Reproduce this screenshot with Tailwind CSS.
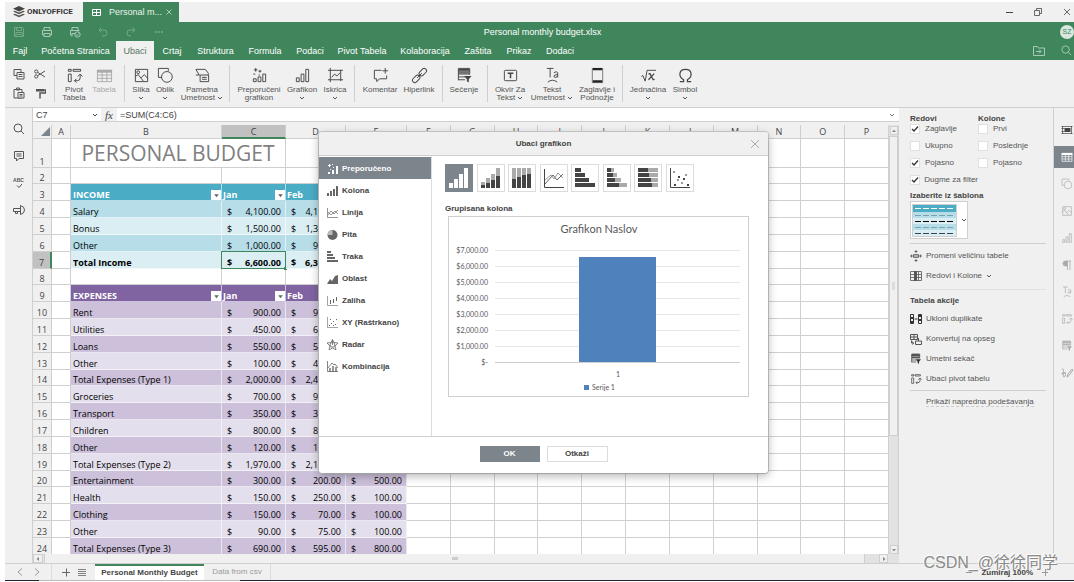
<!DOCTYPE html>
<html lang="sr">
<head>
<meta charset="utf-8">
<title>Personal monthly budget.xlsx</title>
<script src="https://cdn.jsdelivr.net/npm/@tailwindcss/browser@4"></script>
</head>
<body class="flex h-screen flex-col overflow-hidden bg-white pt-[2px] pl-[5px] font-['Liberation_Sans',Arial,sans-serif] text-[8px] leading-[10px] text-[#444]">

<svg class="hidden" aria-hidden="true">
  <defs>
    <symbol id="copy" viewBox="0 0 12 12"><path d="M1 1.500h7v6H1z" fill="none" stroke="currentColor"/><path d="M4 4.500h7V11H4z" fill="#f0f0f0" stroke="currentColor"/><path d="M5.500 6.500h4M5.500 8.500h4" stroke="currentColor"/></symbol>
    <symbol id="paste" viewBox="0 0 12 12"><path d="M1 2.500h8V11H1zM3.500 1h3v2h-3z" fill="none" stroke="currentColor"/><path d="M5 5.500h6V11H5z" fill="#f0f0f0" stroke="currentColor"/><path d="M6.500 7.500h3M6.500 9h3" stroke="currentColor"/></symbol>
    <symbol id="cut" viewBox="0 0 12 12"><g fill="none" stroke="currentColor"><circle cx="2.200" cy="3.500" r="1.600"/><circle cx="2.200" cy="8.500" r="1.600"/><path d="M3.600 4.300 11 9M3.600 7.700 11 3"/></g></symbol>
    <symbol id="brush" viewBox="0 0 12 12"><path d="M2 2h8v2.500H2z" fill="currentColor"/><path d="M10 3h1.500v3H6v5.500" fill="none" stroke="currentColor" stroke-width="1.500"/></symbol>
    <symbol id="pivot" viewBox="0 0 18 18"><g fill="none" stroke="currentColor"><path d="M2.500 2.500h3v2h-3zM7.500 2.500h8v2h-8zM2.500 7.500h3v8h-3zM9 14.500h3q3 0 3-3V8M12.500 10 15 7.500 17.500 10M11 12.500 9 14.500l2 2"/></g></symbol>
    <symbol id="table" viewBox="0 0 18 18"><path d="M1.500 3.500h15v12h-15zM1.500 8.500h15M1.500 12h15M6.500 5v10.500M11.500 5v10.500" fill="none" stroke="currentColor"/><path d="M1 3h16v3H1z" fill="currentColor"/></symbol>
    <symbol id="image" viewBox="0 0 18 18"><g fill="none" stroke="currentColor"><path d="M2.500 2.500h13v13h-13z"/><circle cx="5.500" cy="5.500" r="1.500"/><path d="m2.500 10 3-2 5.500 7M8.500 11.500 12 8l3.500 4"/></g></symbol>
    <symbol id="shapes" viewBox="0 0 18 18"><g fill="none" stroke="currentColor"><path d="M5 11H1.500V1.500H12V4"/><circle cx="10.500" cy="10.500" r="5.700"/></g></symbol>
    <symbol id="smart" viewBox="0 0 18 18"><g fill="none" stroke="currentColor"><path d="M5.500 8.500 2 2.500h10l3.500 4.500-1 1.500M2 8.500h4M6.500 8.500h9v7h-9zM8.500 11h5M8.500 13h5"/></g></symbol>
    <symbol id="recchart" viewBox="0 0 18 18"><g fill="none" stroke="currentColor"><path d="M2.500 12.500h3v3h-3zM7.500 10.500h3v5h-3zM12.500 7.500h3v8h-3z"/><path d="M5 1v4M3 3h4M9.500 3v3M8 4.500h3M2.500 7.500h2M8 8.500h1.500"/></g></symbol>
    <symbol id="chart" viewBox="0 0 18 18"><path d="M2.500 11.500h3v4h-3zM7.500 7.500h3v8h-3zM12.500 2.500h3v13h-3z" fill="none" stroke="currentColor"/></symbol>
    <symbol id="spark" viewBox="0 0 18 18"><g fill="none" stroke="currentColor"><path d="M1 3.500h16M1 13.500h16M3.500 1v15M14.500 3v12M5 11l3-3.500 2.500 2L14 6"/></g></symbol>
    <symbol id="comment" viewBox="0 0 18 18"><path d="M10 3.500H2.500v9H5v3l3-3h7.500V9M14 1v6M11 4h6" fill="none" stroke="currentColor"/></symbol>
    <symbol id="link" viewBox="0 0 18 18"><g fill="none" stroke="currentColor"><rect x="8" y="3" width="9" height="5" rx="2.500" transform="rotate(-45 12.500 5.500)"/><rect x="1" y="10" width="9" height="5" rx="2.500" transform="rotate(-45 5.500 12.500)"/><path d="m6.500 11.500 5-5"/></g></symbol>
    <symbol id="slicer" viewBox="0 0 18 18"><path d="M2.500 1.500h12v3h-12zM2.500 7.500h12M2.500 10.500h7M2.500 13.500h7M2.500 4v10M14.500 4v4" fill="none" stroke="currentColor"/><path d="M3 2h11v2H3zM3 5.500h11V7H3zM8.500 9.500h8l-3 3.500v3.500l-2-1.500v-2z" fill="currentColor"/></symbol>
    <symbol id="textbox" viewBox="0 0 18 18"><rect x="2.500" y="3.500" width="13" height="11" rx="1" fill="none" stroke="currentColor"/><path d="M6 6.500h6M9 6.500V12" fill="none" stroke="currentColor" stroke-width="1.600"/></symbol>
    <symbol id="textart" viewBox="0 0 18 18"><g fill="none" stroke="currentColor"><path d="M3 1.500h7M6.500 1.500V11M10.500 6q3-2 4 0v5M14.500 8q-4 0-4 1.700 0 1.500 2 1.300 1.500-.300 2-1.500M4 16q5-4 10 0"/></g></symbol>
    <symbol id="headfoot" viewBox="0 0 18 18"><path d="M3.500 1.500h11v15h-11z" fill="#f0f0f0" stroke="currentColor" stroke-width=".7"/><path d="M4 1h10v2.500H4zM4 14h10v2.500H4z" fill="#222"/></symbol>
    <symbol id="equation" viewBox="0 0 18 18"><g fill="none" stroke="currentColor"><path d="m1.500 10 1.500-1 2.500 6 2-11.500H17"/><path d="m9 7.500 1.500-.500 3.500 6.500 1.500-.500M15 7l-6 6.500" stroke-width="1.300"/></g></symbol>
    <symbol id="omega" viewBox="0 0 18 18"><path d="M3 15.500h4V13.500C1 10 2 2.500 9 2.500s8 7.500 2 11v2h4" fill="none" stroke="currentColor" stroke-width="1.300"/></symbol>
    <symbol id="chev" viewBox="0 0 6 6"><path d="m1 2 2 2 2-2" fill="none" stroke="currentColor"/></symbol>
    <symbol id="search" viewBox="0 0 12 12"><circle cx="5" cy="5" r="4" fill="none" stroke="currentColor"/><path d="m8 8 3 3" stroke="currentColor"/></symbol>
    <symbol id="tri" viewBox="0 0 6 6"><path d="M1 2h4L3 4.500z" fill="currentColor"/></symbol>
    <symbol id="cell" viewBox="0 0 12 12"><path d="M1.500 2v8M.5 2.500h11M.5 9.500h11M10.500 2v8M.5 4.500h3M.5 7.500h3" stroke="currentColor" stroke-width=".7" fill="none"/><path d="M3.500 4h6v4h-6z" fill="currentColor"/></symbol>
    <symbol id="para" viewBox="0 0 12 12"><path d="M6 2H4.500a2.500 2.500 0 0 0 0 5H6zM6.500 2v9M9 2v9M6 2h4" fill="currentColor" stroke="currentColor" stroke-width=".8"/></symbol>
    <symbol id="sign" viewBox="0 0 12 12"><path d="M1 2c3-2 0 8 2 8s2-6 0-4-2 1-2 0M6 10l1-3 4-5 1 1-4 5.500zM1 6h4" fill="none" stroke="currentColor"/></symbol>
  </defs>
</svg>

<!-- Window title bar -->
<div class="flex h-5 shrink-0 items-stretch bg-[#f0f0f0]">
  <div class="flex w-[78px] items-center gap-[2px] pl-[8px] font-['Roboto',sans-serif] font-bold text-[#333]">
    <svg class="size-3 shrink-0" viewBox="0 0 12 12"><path d="m6 0 6 2.700-6 2.700L0 2.700z" fill="#444"/><path d="m0 5.500 1.800-.8L6 6.600l4.200-1.900 1.800.8-6 2.700zM0 8.500l1.800-.8L6 9.600l4.200-1.900 1.800.8-6 2.800z" fill="#555"/></svg>
    <span>ONLYOFFICE</span>
  </div>
  <div class="flex w-24 items-center bg-[#40865c] pr-[6px] pl-[9px] text-[9px] text-[#eaf2ed]">
    <svg class="size-[9px] shrink-0" viewBox="0 0 9 9"><path d="M.5 1.500h8v6h-8zM.5 4.500h8M4.500 1.500v6" fill="none" stroke="#fff"/></svg>
    <span class="ml-2 grow whitespace-nowrap">Personal m...</span>
    <button aria-label="Close tab"><svg class="size-2" viewBox="0 0 8 8"><path d="m1.500 1.500 5 5m0-5-5 5" stroke="#c5dbcf" stroke-width=".8" fill="none"/></svg></button>
  </div>
  <div class="ml-auto flex items-center gap-[19px] pr-[2px] text-[#444]">
    <button aria-label="Minimize"><svg class="size-[10px]" viewBox="0 0 10 10"><path d="M2 5.500h7" stroke="currentColor"/></svg></button>
    <button aria-label="Restore"><svg class="size-[10px]" viewBox="0 0 10 10"><path d="M1.500 3.500h5v5h-5zM3.500 3V1.500h5v5H7" fill="none" stroke="currentColor" stroke-width=".8"/></svg></button>
    <button aria-label="Close"><svg class="size-[10px]" viewBox="0 0 10 10"><path d="m2 2 6 6m0-6L2 8" fill="none" stroke="currentColor" stroke-width=".8"/></svg></button>
  </div>
</div>

<!-- Quick access and document title -->
<header class="shrink-0 bg-[#40865c] text-[9px] text-white">
  <div class="grid h-[19px] grid-cols-[1fr_auto_1fr] items-center">
    <div class="flex items-center gap-4 pl-2 text-[#a9cab7]">
      <button class="opacity-50" aria-label="Save"><svg class="size-3" viewBox="0 0 12 12"><path d="M1.500 1.500h8l1 1v8h-9zM3.500 1.500v3h5v-3M3 10.500v-4h6v4M4 8.500h4" fill="none" stroke="currentColor"/></svg></button>
      <button aria-label="Print"><svg class="size-3" viewBox="0 0 12 12"><path d="M3 4V1.500h6V4M3 9H1.500V4.500h9V9H9M3 7.500h6v3H3z" fill="none" stroke="currentColor"/></svg></button>
      <button aria-label="Quick print"><svg class="size-3" viewBox="0 0 12 12"><path d="M3 4V1.500h6V4M3 9H1.500V4.500h9M3 10.500v-3h3" fill="none" stroke="currentColor"/><circle cx="8.500" cy="8.500" r="2.700" fill="none" stroke="currentColor"/><path d="m7 8.500 1 1 2-2" fill="none" stroke="currentColor"/></svg></button>
      <button class="opacity-50" aria-label="Undo"><svg class="size-3" viewBox="0 0 12 12"><path d="M4.500 1.500 2 4l2.500 2.500M2 4h5a3 3 0 0 1 0 6H5" fill="none" stroke="currentColor"/></svg></button>
      <button class="opacity-50" aria-label="Redo"><svg class="size-3" viewBox="0 0 12 12"><path d="M7.500 1.500 10 4 7.500 6.500M10 4H5a3 3 0 0 0 0 6h1" fill="none" stroke="currentColor"/></svg></button>
      <button aria-label="More"><svg class="size-3" viewBox="0 0 12 12"><path d="M2 6h1.500M5 6h1.500M8 6h1.500" stroke="currentColor"/></svg></button>
    </div>
    <h1 class="pl-[6px]">Personal monthly budget.xlsx</h1>
    <div class="flex justify-end"><span class="flex size-[14px] items-center justify-center rounded-full bg-[#d9e7df] text-[7px] text-[#40865c]">SZ</span></div>
  </div>
  <nav class="flex h-[19px] items-stretch">
    <div id="tabs" class="flex"></div>
    <div class="ml-auto flex items-center gap-4 pr-[2px] text-[#a9cab7]">
      <button aria-label="Open location"><svg class="size-3" viewBox="0 0 12 12"><path d="M.5 10.500v-9h4l1 1.500h6v7.500zM3 6.500h5M6 4.500l2 2-2 2" fill="none" stroke="currentColor"/></svg></button>
      <button aria-label="Search"><svg class="size-[11px]"><use href="#search"/></svg></button>
    </div>
  </nav>
</header>

<!-- Ribbon -->
<div class="flex h-[48px] shrink-0 items-stretch border-b border-[#cfcfcf] bg-[#f0f0f0] py-[5px]">
  <div class="grid w-[49px] shrink-0 grid-cols-2 place-items-center pr-1 pl-1 text-[#555]">
    <button aria-label="Copy"><svg class="size-3"><use href="#copy"/></svg></button>
    <button aria-label="Cut"><svg class="size-3"><use href="#cut"/></svg></button>
    <button aria-label="Paste"><svg class="size-3"><use href="#paste"/></svg></button>
    <button aria-label="Format painter"><svg class="size-3"><use href="#brush"/></svg></button>
  </div>
  <div id="ribbon" class="flex"></div>
</div>

<main class="flex min-h-0 flex-1 bg-[#f0f0f0]">
  <!-- Left tools -->
  <aside class="flex w-7 shrink-0 flex-col items-center gap-[15px] border-r border-[#cfcfcf] pt-[15px] text-[#555]">
    <button aria-label="Find"><svg class="size-3"><use href="#search"/></svg></button>
    <button aria-label="Comments"><svg class="size-3" viewBox="0 0 12 12"><path d="M1.500 1.500h9v7H6l-2.500 2.500V8.500h-2zM3.500 4h5M3.500 6h5" fill="none" stroke="currentColor"/></svg></button>
    <button aria-label="Spell check" class="flex size-3 flex-col items-center text-[5px] leading-[6px] font-bold"><span>ABC</span><svg class="size-[6px]" viewBox="0 0 6 6"><path d="m1 2.500 2 2 3-3.500" fill="none" stroke="currentColor"/></svg></button>
    <button aria-label="Feedback"><svg class="size-3" viewBox="0 0 12 12"><path d="M.5 4.500H7M7 7.500H.5v-3M7.500 2.500v7M2.500 7.500v2h2v-2" fill="none" stroke="currentColor"/><path d="M7.500 1.500q4 1 4 4.500t-4 4.500z" fill="none" stroke="currentColor"/></svg></button>
  </aside>

  <div class="flex min-w-0 flex-1 flex-col">
    <!-- Formula bar -->
    <div class="flex h-[14px] shrink-0 items-stretch border-b border-[#cfcfcf] bg-white text-[9px]">
      <label class="flex w-[68px] items-center px-[3px]"><input class="w-full min-w-0 outline-none" aria-label="Cell name" value="C7"><svg class="size-[6px] shrink-0"><use href="#chev"/></svg></label>
      <button class="w-4 bg-[#f0f0f0] font-['Liberation_Serif',serif] text-[11px] italic" aria-label="Insert function">fx</button>
      <input class="min-w-0 flex-1 pl-[3px] outline-none" aria-label="Formula" value="=SUM(C4:C6)">
      <button aria-label="Expand formula bar" class="flex w-[10px] items-center"><svg class="size-[6px] text-[#777]"><use href="#chev"/></svg></button>
    </div>
    <!-- Sheet -->
    <div class="flex min-h-0 flex-1 pt-[3px]">
      <div class="min-w-0 flex-1 overflow-hidden bg-white">
        <table class="w-full table-fixed border-separate border-spacing-0 font-['Open_Sans',sans-serif] text-[9px] leading-[11px] text-black">
          <colgroup><col class="w-[19px]"><col class="w-[19px]"><col class="w-[151px]"><col class="w-16"><col class="w-[60px]"><col class="w-[61px]"><col span="11"></colgroup>
          <thead id="heads" class="bg-[#f0f0f0] text-[#444]"></thead>
          <tbody id="rows"></tbody>
        </table>
      </div>
      <div class="flex w-[10px] shrink-0 flex-col border-r border-[#cfcfcf] bg-[#e2e2e2] text-[#888]">
        <button class="m-px flex h-[9px] w-2 items-center justify-center border border-[#cfcfcf] bg-[#f0f0f0]" aria-label="Scroll up"><svg class="size-[6px] rotate-180"><use href="#tri"/></svg></button>
        <div class="flex h-[300px] w-[9px] items-center justify-center border border-[#cfcfcf] bg-[#f0f0f0]"><span class="h-2 w-[3px] bg-[#dcdcdc]"></span></div>
        <button class="mx-px mt-auto flex h-[9px] w-2 items-center justify-center border border-[#cfcfcf] bg-[#f0f0f0]" aria-label="Scroll down"><svg class="size-[6px]"><use href="#tri"/></svg></button>
      </div>
    </div>
    <div class="flex h-[9px] shrink-0 items-stretch bg-[#e2e2e2] pr-[11px] text-[#888]">
      <button class="mr-px flex w-[10px] items-center justify-center border border-[#cfcfcf] bg-[#f0f0f0]" aria-label="Scroll left"><svg class="size-[6px] rotate-90"><use href="#tri"/></svg></button>
      <div class="mr-[14px] flex flex-1 items-center justify-center border-x border-[#cfcfcf] bg-[#f0f0f0]"><span class="h-[3px] w-[6px] bg-[#ccc]"></span></div>
      <button class="flex w-[9px] items-center justify-center border border-[#cfcfcf] bg-[#f0f0f0]" aria-label="Scroll right"><svg class="size-[6px] -rotate-90"><use href="#tri"/></svg></button>
    </div>
  </div>

  <!-- Table settings -->
  <aside class="w-[154px] shrink-0 pt-[6px] pr-[7px] pl-[11px] text-[#555]">
    <div class="grid grid-cols-2 leading-[9px] font-bold text-[#444]"><h2>Redovi</h2><h2>Kolone</h2></div>
    <div id="checks" class="grid grid-cols-2"></div>
    <h2 class="font-bold text-[#444]">Izaberite iz šablona</h2>
    <button class="flex h-[38px] w-[58px] items-center gap-1 border border-[#cfcfcf] bg-white pl-[1px]" aria-label="Template">
      <svg class="h-[33px] w-[45px] border border-[#cfcfcf]" viewBox="0 0 43 31"><rect width="43" height="7" fill="#4bacc6"/><rect y="7" width="43" height="6" fill="#b6dde8"/><rect y="13" width="43" height="6" fill="#daeef3"/><rect y="19" width="43" height="6" fill="#b6dde8"/><rect y="25" width="43" height="6" fill="#daeef3"/><g stroke-dasharray="6 2"><path d="M2 3.500h39" stroke="#fff"/><path d="M2 10.500h39M2 22.500h39" stroke="#7aa3ad"/><path d="M2 16.500h39" stroke="#000"/><path d="M2 28.500h39" stroke="#345"/></g></svg>
      <svg class="size-[6px]"><use href="#chev"/></svg>
    </button>
    <div class="mt-1 border-t border-[#cfcfcf] pt-[2px]">
      <button class="flex h-5 items-center gap-1"><svg class="size-3" viewBox="0 0 12 12"><path d="M3.500 4.500h5v3h-5zM6 0v3M6 9v3M0 6h3M9 6h3M4.500 1.500h3M4.500 10.500h3M1.500 4.500v3M10.500 4.500v3M3 6h6" fill="none" stroke="currentColor" stroke-width=".8"/></svg>Promeni veličinu tabele</button>
      <button class="flex h-5 items-center gap-1"><svg class="size-3" viewBox="0 0 12 12"><path d="M.5 1.500h11v9H.5zM.5 4.500h11M.5 7.500h11M8.500 1.500v9" fill="none" stroke="currentColor" stroke-width=".8"/><path d="M4 1h3v10H4z" fill="currentColor"/></svg>Redovi i Kolone<svg class="size-[6px]"><use href="#chev"/></svg></button>
    </div>
    <div class="mt-[3px] border-t border-[#e2e2e2] pt-[6px]">
      <h2 class="font-bold text-[#444]">Tabela akcije</h2>
      <div class="pt-[3px]">
        <button class="flex h-5 items-center gap-1"><svg class="size-3 text-[#333]" viewBox="0 0 12 12"><path d="M.5 1.500h3v9h-3zM8.500 1.500h3v9h-3zM4.500 6h3" fill="none" stroke="currentColor"/><path d="M1 4h3v2H1zM1 8h3v2H1zM8 2h3v2H8zM8 6h3v2H8z" fill="currentColor"/></svg>Ukloni duplikate</button>
        <button class="flex h-5 items-center gap-1"><svg class="size-3" viewBox="0 0 12 12"><path d="M.5 1.500h7v5h-7zM.5 4h7M4 1.500v5M5.500 8h6v3.500h-6zM8.500 8V5M3.500 10H1.500V7.500M2.500 8.500l1 1.500-1 1.500" fill="none" stroke="currentColor"/></svg>Konvertuj na opseg</button>
        <button class="flex h-5 items-center gap-1"><svg class="size-3 text-[#333]"><use href="#slicer"/></svg>Umetni sekač</button>
        <button class="flex h-5 items-center gap-1"><svg class="size-3 text-[#333]"><use href="#pivot"/></svg>Ubaci pivot tabelu</button>
      </div>
    </div>
    <div class="mt-px border-t border-[#cfcfcf] pt-[6px] pl-4"><a href="#" class="border-b border-dashed border-[#ccc]">Prikaži napredna podešavanja</a></div>
  </aside>

  <aside id="side" class="flex w-[21px] shrink-0 flex-col gap-[5px] border-l border-[#cfcfcf] pt-[11px] text-[#aaa]"></aside>
</main>

<!-- Sheet tabs -->
<footer class="flex h-[17px] shrink-0 items-stretch border-t border-[#cfcfcf] bg-[#f0f0f0]">
  <div class="flex w-[47px] items-center gap-[5px] border-r border-[#dcdcdc] pl-[9px] text-[#999]">
    <button aria-label="Previous sheet"><svg class="size-3" viewBox="0 0 12 12"><path d="M8 2.500 4 6l4 3.500" fill="none" stroke="currentColor"/></svg></button>
    <button aria-label="Next sheet"><svg class="size-3" viewBox="0 0 12 12"><path d="m4 2.500 4 3.500-4 3.500" fill="none" stroke="currentColor"/></svg></button>
  </div>
  <div class="flex w-[43px] items-center justify-center gap-1 text-[#666]">
    <button aria-label="Add sheet"><svg class="size-3" viewBox="0 0 12 12"><path d="M2 6.500h8M6.500 2.500v8" stroke="currentColor"/></svg></button>
    <button aria-label="List of sheets"><svg class="size-3" viewBox="0 0 12 12"><path d="M2 3.500h8M2 5.500h8M2 7.500h8M2 9.500h8" stroke="currentColor" stroke-width=".8"/></svg></button>
  </div>
  <button class="w-[109px] border-t-2 border-[#40865c] bg-white font-bold">Personal Monthly Budget</button>
  <button class="w-[67px] border-r border-[#dcdcdc] text-[#999]">Data from csv</button>
  <div class="ml-auto flex items-center gap-2 pr-[25px] text-[#999]">
    <button aria-label="Zoom out"><svg class="size-2" viewBox="0 0 8 8"><path d="M1 4.500h6" stroke="currentColor"/></svg></button>
    <span class="pt-[2px] font-bold text-[#444]">Zumiraj 100%</span>
    <button aria-label="Zoom in"><svg class="size-2" viewBox="0 0 8 8"><path d="M1 4.500h6M4.500 1v7" stroke="currentColor"/></svg></button>
  </div>
</footer>
<div class="mb-px flex h-px shrink-0"><span class="w-[34px] bg-[#223]"></span><span class="w-[201px] bg-[#bbb]"></span><span class="flex-1 bg-[#223]"></span></div>

<div class="pointer-events-none absolute right-4 bottom-[11px] font-['Liberation_Sans','Noto_Sans_CJK_SC',sans-serif] text-[16px] leading-4 whitespace-nowrap text-[#8a8a8a] [text-shadow:-1px_-1px_0_#fff]">CSDN_@徐徐同学</div>

<!-- Insert chart dialog -->
<section role="dialog" aria-label="Ubaci grafikon" class="absolute top-[132px] left-[319px] flex h-[341px] w-[449px] flex-col overflow-hidden rounded-[3px] bg-white text-[8px] text-[#444] shadow-[0_3px_10px_rgba(0,0,0,0.3),0_0_0_1px_#cfcfcf]">
  <div class="flex h-6 shrink-0 items-center border-b border-[#cfcfcf] bg-[#f0f0f0] pr-[7px] pl-[19px]">
    <h2 class="flex-1 text-center font-bold">Ubaci grafikon</h2>
    <button aria-label="Close dialog"><svg class="size-3" viewBox="0 0 12 12"><path d="m2 2 8 8m0-8-8 8" stroke="#999" fill="none" stroke-width=".8"/></svg></button>
  </div>
  <div class="flex min-h-0 flex-1">
    <div id="kinds" class="w-[113px] shrink-0 border-r border-[#dcdcdc] pt-px"></div>
    <div class="pt-2 pl-[13px]">
      <div id="types" class="flex w-[249px] justify-between"></div>
      <h3 class="mt-3 mb-[2px] font-bold">Grupisana kolona</h3>
      <svg class="ml-[3px] h-[181px] w-[301px] font-['Lato',sans-serif]" viewBox="0 0 301 181" fill="#595959">
        <rect x=".5" y=".5" width="300" height="180" fill="#fff" stroke="#cfcfcf"/>
        <text x="151" y="17" text-anchor="middle" font-size="11">Grafikon Naslov</text>
        <path d="M47 34.500h245M47 50.500h245M47 66.500h245M47 82.500h245M47 98.500h245M47 114.500h245M47 130.500h245" stroke="#e6e6e6"/>
        <path d="M47 146.500h245" stroke="#cfcfcf"/>
        <rect x="131" y="41" width="77" height="105" fill="#4f81bd"/>
        <g text-anchor="end" font-size="7">
          <text x="40" y="37">$7,000.00</text><text x="40" y="53">$6,000.00</text><text x="40" y="69">$5,000.00</text><text x="40" y="85">$4,000.00</text><text x="40" y="101">$3,000.00</text><text x="40" y="117">$2,000.00</text><text x="40" y="133">$1,000.00</text><text x="40" y="149">$-</text>
        </g>
        <text x="170" y="161" text-anchor="middle" font-size="7">1</text>
        <rect x="136" y="169" width="5" height="5" fill="#4f81bd"/>
        <text x="144" y="174" font-size="7">Serije 1</text>
      </svg>
    </div>
  </div>
  <div class="flex h-[37px] shrink-0 items-start justify-center gap-[7px] border-t border-[#cfcfcf] pt-[9px] font-bold">
    <button class="h-4 w-[60px] bg-[#7d858c] text-white">OK</button>
    <button class="h-4 w-[61px] border border-[#dcdcdc] bg-white">Otkaži</button>
  </div>
</section>

<script>
const $ = id => document.getElementById(id);
const chev = '<svg class="inline-block size-[6px]"><use href="#chev"/></svg>';

$('tabs').innerHTML = [
  ['Fajl','w-[30px]'],['Početna Stranica','w-[81px]'],['Ubaci','w-[38px]'],['Crtaj','w-9'],['Struktura','w-[51px]'],['Formula','w-12'],
  ['Podaci','w-[42px]'],['Pivot Tabela','w-[62px]'],['Kolaboracija','w-16'],['Zaštita','w-[42px]'],['Prikaz','w-10'],['Dodaci','w-[42px]']
].map(([t,w]) => `<button class="${w} whitespace-nowrap ${t==='Ubaci' ? 'bg-[#f0f0f0] text-[#5a7566]' : ''}">${t}</button>`).join('');

const groups = [
  ['pl-[3px] pr-[6px]', [['pivot','Pivot','Tabela','w-8'],['table','Tabela','','w-7','text-[#aaa]']]],
  ['pl-1 pr-[2px]', [['image','Slika',chev,'w-6'],['shapes','Oblik',chev,'w-6'],['smart','Pametna','Umetnost '+chev,'w-[50px]']]],
  ['px-1', [['recchart','Preporučeni','grafikon','w-[50px]'],['chart','Grafikon',chev,'w-9'],['spark','Iskrica',chev,'w-[30px]']]],
  ['pl-1 pr-[5px]', [['comment','Komentar','','w-[42px]'],['link','Hiperlink','','w-9']]],
  ['pr-[2px]', [['slicer','Sečenje','','w-[42px]']]],
  ['px-1', [['textbox','Okvir Za','Tekst '+chev,'w-9'],['textart','Tekst','Umetnost '+chev,'w-12'],['headfoot','Zaglavlje i','Podnožje','w-[42px]']]],
  ['px-1', [['equation','Jednačina',chev,'w-[42px]'],['omega','Simbol',chev,'w-8']]]
];
$('ribbon').innerHTML = groups.map(([p,items]) => `<div class="flex border-l border-[#cfcfcf] ${p}">` +
  items.map(([i,a,b,w,c]) => `<button class="${w} ${c||'text-[#555]'} flex flex-col items-center leading-2 whitespace-nowrap"><svg class="mt-[2px] mb-[2px] size-[17px] shrink-0 ${c||'text-[#444]'}"><use href="#${i}"/></svg><span>${a}</span><span>${b}</span></button>`).join('') + '</div>').join('');

/* Sheet */
const letters = ['A','B','C','D','E','F','G','H','I','J','K','L','M','N','O','P'];
$('heads').innerHTML = '<tr><th class="h-[14px] border-r border-b border-[#cfcfcf] p-0"><svg class="ml-auto size-[10px]" viewBox="0 0 10 10"><path d="M9 0v9H0z" fill="#7d858c"/></svg></th>' +
  letters.map(l => `<th scope="col" class="border-r p-0 font-normal ${l==='C' ? 'border-b-2 border-r-[#cfcfcf] border-b-[#40865c] bg-[#c1c1c1]' : 'border-b border-[#cfcfcf]'}">${l}</th>`).join('') + '</tr>';

const data = {
  3:['INCOME','Jan','Feb'],4:['Salary','4,100.00','4,100.00'],5:['Bonus','1,500.00','1,300.00'],6:['Other','1,000.00','900.00'],7:['Total Income','6,600.00','6,300.00'],
  9:['EXPENSES','Jan','Feb'],10:['Rent','900.00','900.00'],11:['Utilities','450.00','600.00'],12:['Loans','550.00','500.00'],13:['Other','100.00','400.00'],
  14:['Total Expenses (Type 1)','2,000.00','2,400.00'],15:['Groceries','700.00','900.00'],16:['Transport','350.00','300.00'],17:['Children','800.00','800.00'],18:['Other','120.00','100.00'],
  19:['Total Expenses (Type 2)','1,970.00','2,100.00'],20:['Entertainment','300.00','200.00','500.00'],21:['Health','150.00','250.00','100.00'],22:['Clothing','150.00','70.00','100.00'],23:['Other','90.00','75.00','100.00'],24:['Total Expenses (Type 3)','690.00','595.00','800.00']
};
const bg = n => n===3 ? 'bg-[#4bacc6] text-white font-bold' : n===9 ? 'bg-[#8064a2] text-white font-bold' :
  n<9 ? (n%2 ? 'bg-[#daeef3]' : 'bg-[#b6dde8]') : (n%2 ? 'bg-[#e4dfec]' : 'bg-[#ccc0da]');
const filter = '<button class="flex size-[10px] items-center justify-center bg-white text-[#666]" aria-label="Filter"><svg class="size-[7px]"><use href="#tri"/></svg></button>';
const plain = '<td class="border-r border-b border-[#d0d0d0]"></td>';
let html = '';
for (let n = 1; n <= 24; n++) {
  const h = n===1 ? 'h-[29px]' : [2,8,14,20].includes(n) ? 'h-4' : 'h-[17px]';
  html += `<tr class="${h}"><th scope="row" class="border-b p-0 pt-1 align-bottom font-normal text-[#444] ${n===7 ? 'border-r-2 border-r-[#40865c] border-b-[#cfcfcf] bg-[#c1c1c1]' : 'border-r border-[#cfcfcf] bg-[#f0f0f0]'}">${n}</th>${plain}`;
  const d = data[n];
  if (n===1) html += `<td colspan="2" class="border-r border-b border-[#d0d0d0] p-0 text-center text-[21px] leading-[28px] text-[#808080]">PERSONAL BUDGET</td>` + plain + plain;
  else if (!d) html += plain.repeat(4);
  else {
    const c = bg(n), head = n===3 || n===9, bold = n===7 ? 'font-bold' : '';
    html += `<td class="border-r border-b border-white/60 p-0 align-bottom ${c} ${bold}"><div class="flex items-end justify-between ${head ? '' : 'pt-1'} pl-[2px]"><span>${d[0]}</span>${head ? filter : ''}</div></td>`;
    for (let k = 1; k <= 3; k++) {
      const v = d[k];
      html += `<td class="relative border-r border-b border-white/60 p-0 align-bottom ${c} ${bold}">` +
        (!v ? '' : head ? `<div class="flex items-end justify-between pl-px"><span>${v}</span>${filter}</div>` : `<div class="flex justify-between pt-1 pr-1 pl-[5px]"><span>$</span><span>${v}</span></div>`) +
        (n===7 && k===1 ? '<span class="absolute -top-px -left-px h-[18px] w-[65px] border border-[#40865c]"></span><span class="absolute -right-[2px] -bottom-[2px] size-[3px] bg-[#40865c]"></span>' : '') + '</td>';
    }
  }
  html += plain.repeat(11) + '</tr>';
}
$('rows').innerHTML = html;

/* Table settings */
$('checks').innerHTML = [['Zaglavlje',1],['Prvi',0],['Ukupno',0],['Poslednje',0],['Pojasno',1],['Pojasno',0],['Dugme za filter',1]].map(([t,on]) =>
  `<label class="mb-[6px] flex h-[11px] items-center gap-[5px] whitespace-nowrap"><span class="relative size-[10px]"><input type="checkbox" ${on ? 'checked' : ''} class="peer absolute inset-0 size-[10px] appearance-none border border-[#e0e0e0] bg-white"><svg class="absolute inset-0 hidden size-[10px] peer-checked:block" viewBox="0 0 10 10"><path d="m2 5 2 2 4-4.500" fill="none" stroke="#333" stroke-width="1.300"/></svg></span>${t}</label>`).join('');
$('side').innerHTML = ['cell','table','shapes','image','chart','para','textart','pivot','slicer','sign'].map((i,k) =>
  `<button aria-label="${i}" class="flex h-[22px] w-full items-center justify-end pr-px ${k===1 ? 'bg-[#7d858c] text-white' : k===0 ? 'text-[#444]' : ''}"><svg class="size-3"><use href="#${i}"/></svg></button>`).join('');

/* Chart kinds */
const kinds = [
  ['Preporučeno','<path d="M1 9h2v2H1zM5 7h2v4H5zM9 3h2v8H9zM2 1h1v1h1v1H3v1H2V3H1V2h1zM5 1h1v1H5zM6 4h1v1H6zM3 6h1v1H3z" fill="currentColor"/>'],
  ['Kolona','<path d="M0 8h2v3H0zM3 6h2v5H3zM6 4h2v7H6zM9 1h2v10H9z" fill="currentColor"/>'],
  ['Linija','<path d="M.5 1v9.500H11M1 8l3-4 3 3 4-4M1 5l3 3 4-4 3 3" fill="none" stroke="currentColor" stroke-width=".7"/>'],
  ['Pita','<circle cx="5.500" cy="6" r="5" fill="currentColor"/><path d="M5.500 6V1A5 5 0 0 0 .5 6z" fill="#bbb"/>'],
  ['Traka','<path d="M0 0h4v2H0zM0 3h6v2H0zM0 6h8v2H0zM0 9h11v2H0z" fill="currentColor"/>'],
  ['Oblast','<path d="m0 11 3-5 2 2 3-5 3-1v9z" fill="currentColor"/>'],
  ['Zaliha','<path d="M.5 1v9.500H11" fill="none" stroke="currentColor" stroke-width=".6"/><path d="M3 5h1v4H3zM6 4h1v4H6zM9 2h1v4H9z" fill="currentColor"/>'],
  ['XY (Raštrkano)','<path d="M.5 0v10.500H11" fill="none" stroke="currentColor" stroke-width=".6"/><path d="M3 2h1v1H3zM6 4h1v1H6zM9 2h1v1H9zM4 6h1v1H4zM8 7h1v1H8zM2 8h1v1H2zM6 8h1v1H6z" fill="currentColor"/>'],
  ['Radar','<path d="m5.500.5 1.500 3 4 .5-3 3 1 4-3.500-2L2 11l1-4-3-3 4-.5zM5.500 3 8 5 7 8H4L3 5zM5.500 1v5" fill="none" stroke="currentColor" stroke-width=".8"/>'],
  ['Kombinacija','<path d="M2 7h2v4H2zM5 5h2v6H5zM8 6h2v5H8z" fill="#999"/><path d="M.5 0v10.500H11M1 7l4-5 2 2 1-1 3 4" fill="none" stroke="currentColor" stroke-width=".8"/>']
];
$('kinds').innerHTML = kinds.map(([t,p],k) =>
  `<button class="flex h-[22px] w-full items-center gap-[4px] pt-px pl-2 font-bold ${k ? '' : 'bg-[#7d858c] text-white'}"><svg class="size-[11px] ${k ? 'text-[#666]' : ''}" viewBox="0 0 11 11">${p}</svg>${t}</button>`).join('');

const types = [
  '<path d="M0 15h4v5H0zM5 11h4v9H5zM10 6h4v14h-4zM15 0h4v20h-4z" fill="#fff"/>',
  '<path d="M0 14h4v3H0zM5 10h4v5H5zM10 6h4v6h-4zM15 0h4v8h-4z" fill="#aaa"/><path d="M0 17h4v3H0zM5 15h4v5H5zM10 12h4v8h-4zM15 8h4v12h-4z" fill="#444"/>',
  '<path d="M0 0h4v11H0zM5 0h4v9H5zM10 0h4v7h-4zM15 0h4v6h-4z" fill="#aaa"/><path d="M0 11h4v9H0zM5 9h4v11H5zM10 7h4v13h-4zM15 6h4v14h-4z" fill="#444"/>',
  '<path d="M.5 1v18.500H20" fill="none" stroke="#444"/><path d="m1 16 8-9 4 5 6-6" fill="none" stroke="#666"/><path d="m1 12 6-5 3 4 4-6 5 5" fill="none" stroke="#999"/>',
  '<path d="M0 0h6v4H0zM0 5h10v4H0zM0 10h14v4H0zM0 15h20v4H0z" fill="#444"/>',
  '<path d="M4 0h3v4H4zM6 5h4v4H6zM8 10h6v4H8zM12 15h8v4h-8z" fill="#aaa"/><path d="M0 0h4v4H0zM0 5h6v4H0zM0 10h8v4H0zM0 15h12v4H0z" fill="#444"/>',
  '<path d="M10 0h10v4H10zM11 5h9v4h-9zM13 10h7v4h-7zM14 15h6v4h-6z" fill="#aaa"/><path d="M0 0h10v4H0zM0 5h11v4H0zM0 10h13v4H0zM0 15h14v4H0z" fill="#444"/>',
  '<path d="M.5 0v19.500H20" fill="none" stroke="#444"/><path d="M3 3h2v2H3zM15 6h2v2h-2zM7 11h2v2H7zM11 14h2v2h-2z" fill="#999"/><path d="M8 8h2v2H8zM13 10h2v2h-2zM4 16h2v2H4zM17 16h2v2h-2z" fill="#444"/>'
];
$('types').innerHTML = types.map((p,k) =>
  `<button aria-label="Chart type ${k+1}" class="flex size-7 items-center justify-center border ${k ? 'border-[#dcdcdc] bg-white' : 'border-[#7d858c] bg-[#7d858c]'}"><svg class="size-5" viewBox="0 0 20 20">${p}</svg></button>`).join('');
</script>
</body>
</html>
